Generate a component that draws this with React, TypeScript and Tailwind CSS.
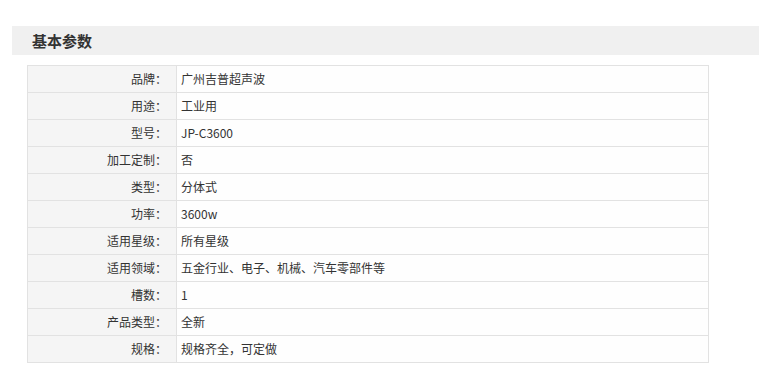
import React from "react";

const params: [string, string][] = [
	["品牌", "广州吉普超声波"],
	["用途", "工业用"],
	["型号", "JP-C3600"],
	["加工定制", "否"],
	["类型", "分体式"],
	["功率", "3600w"],
	["适用星级", "所有星级"],
	["适用领域", "五金行业、电子、机械、汽车零部件等"],
	["槽数", "1"],
	["产品类型", "全新"],
	["规格", "规格齐全，可定做"],
];

export default function App() {
	return (
		<div
			className="min-h-screen bg-white pt-[26px] text-[#333]"
			style={{ fontFamily: '"Noto Sans CJK SC", "Noto Sans", sans-serif' }}
		>
			{/* HEADER */}
			<div className="ml-[12px] h-[29px] bg-[#f0f0f0] pl-[20px] flex items-center">
				<h2 className="text-[15px] font-bold leading-none text-[#333]">基本参数</h2>
			</div>

			{/* PARAM TABLE */}
			<div className="ml-[27px] mt-[10px] w-[682px]">
				<table className="w-full border-collapse text-[12px]">
					<tbody>
						{params.map(([label, value]) => (
							<tr key={label} className="h-[27px]">
								<td className="w-[149px] border border-[#e2e2e2] bg-[#f5f5f5] pr-[9px] text-right leading-none">
									{label}：
								</td>
								<td className="border border-[#e2e2e2] bg-[#fefefe] pl-[4px] leading-none">
									{value}
								</td>
							</tr>
						))}
					</tbody>
				</table>
			</div>
		</div>
	);
}
